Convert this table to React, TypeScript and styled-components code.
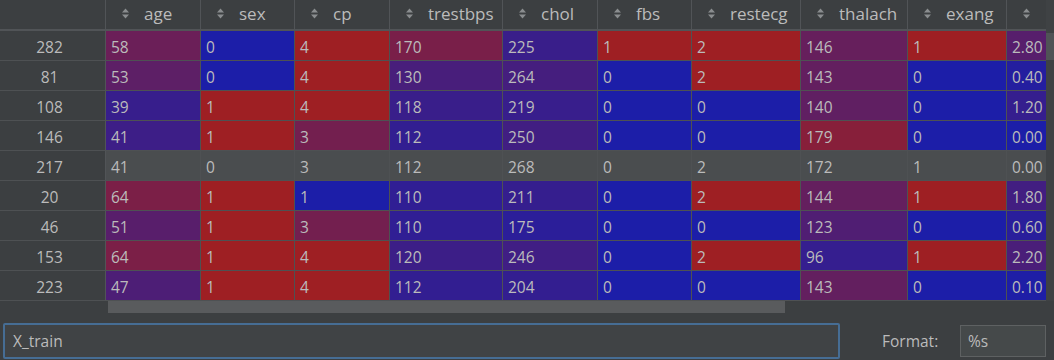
import React from 'react';
import styled, { createGlobalStyle } from 'styled-components';

const columns = [
  { name: 'age', width: 95, min: 29, max: 77 },
  { name: 'sex', width: 94, min: 0, max: 1 },
  { name: 'cp', width: 95, min: 1, max: 4 },
  { name: 'trestbps', width: 113, min: 94, max: 200 },
  { name: 'chol', width: 95, min: 126, max: 564 },
  { name: 'fbs', width: 94, min: 0, max: 1 },
  { name: 'restecg', width: 109, min: 0, max: 2 },
  { name: 'thalach', width: 107, min: 71, max: 202 },
  { name: 'exang', width: 99, min: 0, max: 1 },
  { name: 'oldpeak', width: 100, min: 0, max: 6.2 },
];

const rows: { index: number; values: string[]; selected?: boolean }[] = [
  { index: 282, values: ['58', '0', '4', '170', '225', '1', '2', '146', '1', '2.80'] },
  { index: 81, values: ['53', '0', '4', '130', '264', '0', '2', '143', '0', '0.40'] },
  { index: 108, values: ['39', '1', '4', '118', '219', '0', '0', '140', '0', '1.20'] },
  { index: 146, values: ['41', '1', '3', '112', '250', '0', '0', '179', '0', '0.00'] },
  { index: 217, values: ['41', '0', '3', '112', '268', '0', '2', '172', '1', '0.00'], selected: true },
  { index: 20, values: ['64', '1', '1', '110', '211', '0', '2', '144', '1', '1.80'] },
  { index: 46, values: ['51', '1', '3', '110', '175', '0', '0', '123', '0', '0.60'] },
  { index: 153, values: ['64', '1', '4', '120', '246', '0', '2', '96', '1', '2.20'] },
  { index: 223, values: ['47', '1', '4', '112', '204', '0', '0', '143', '0', '0.10'] },
];

const BLUE = [28, 30, 168];
const RED = [158, 31, 35];

// blue for the column minimum, red for the maximum
const heatColor = (value: number, min: number, max: number) => {
  const t = Math.min(1, Math.max(0, (value - min) / (max - min)));
  const c = BLUE.map((b, i) => Math.round(b + (RED[i] - b) * t));
  return `rgb(${c[0]}, ${c[1]}, ${c[2]})`;
};

const SortIcon = () => (
  <svg width="7" height="11" viewBox="0 0 7 11">
    <path d="M0 4.5 L3.5 0.5 L7 4.5 Z" fill="#8a8d8f" />
    <path d="M0 6.5 L7 6.5 L3.5 10.5 Z" fill="#8a8d8f" />
  </svg>
);

const App: React.FC = () => {
  return (
    <>
      <GlobalStyle />
      <Page>
        <TableArea>
          <Viewport>
            <HeaderRow>
              <IndexHeader />
              {columns.map((col, i) => (
                <HeaderCell key={col.name} $width={col.width}>
                  <SortIcon />
                  {i < columns.length - 1 && <HeaderLabel>{col.name}</HeaderLabel>}
                </HeaderCell>
              ))}
            </HeaderRow>
            {rows.map(row => (
              <Row key={row.index}>
                <IndexCell>{row.index}</IndexCell>
                {row.values.map((v, i) => (
                  <Cell
                    key={columns[i].name}
                    $width={columns[i].width}
                    style={{
                      background: row.selected
                        ? '#4a4d4f'
                        : heatColor(parseFloat(v), columns[i].min, columns[i].max),
                    }}
                  >
                    {v}
                  </Cell>
                ))}
              </Row>
            ))}
          </Viewport>
          <VScroll>
            <VThumb />
          </VScroll>
        </TableArea>
        <HScroll>
          <HThumb />
        </HScroll>
        <Footer>
          <NameInput>X_train</NameInput>
          <FormatLabel>Format:</FormatLabel>
          <FormatInput>%s</FormatInput>
        </Footer>
      </Page>
    </>
  );
};

const GlobalStyle = createGlobalStyle`
  body {
    margin: 0;
    background: #3c3f41;
    overflow: hidden;
  }
`;

const Page = styled.div`
  width: 1054px;
  height: 360px;
  display: flex;
  flex-direction: column;
  background: #3c3f41;
  font-family: 'Open Sans', 'Noto Sans', sans-serif;
  font-size: 15.5px;
  color: #bbbbbb;
`;

const TableArea = styled.div`
  display: flex;
  height: 301px;
`;

const Viewport = styled.div`
  width: 1046px;
  overflow: hidden;
  display: flex;
  flex-direction: column;
`;

const HeaderRow = styled.div`
  display: flex;
  flex-shrink: 0;
  height: 31px;
  box-sizing: border-box;
  border-bottom: 2px solid #515457;
`;

const IndexHeader = styled.div`
  width: 106px;
  flex-shrink: 0;
  box-sizing: border-box;
  border-right: 1px solid #515457;
`;

const HeaderCell = styled.div<{ $width: number }>`
  width: ${p => p.$width}px;
  flex-shrink: 0;
  box-sizing: border-box;
  border-right: 1px solid #515457;
  display: flex;
  align-items: center;
  padding-left: 16px;
  padding-bottom: 3px;
  white-space: nowrap;
  overflow: hidden;
`;

const HeaderLabel = styled.span`
  margin-left: 15px;
  font-size: 17px;
`;

const Row = styled.div`
  display: flex;
  flex-shrink: 0;
  height: 30px;
`;

const IndexCell = styled.div`
  width: 106px;
  flex-shrink: 0;
  box-sizing: border-box;
  border-right: 1px solid #515457;
  border-bottom: 1px solid #4e5153;
  display: flex;
  align-items: center;
  justify-content: center;
  padding: 2px 6px 0 0;
`;

const Cell = styled.div<{ $width: number }>`
  width: ${p => p.$width}px;
  flex-shrink: 0;
  box-sizing: border-box;
  border-right: 1px solid #4e5153;
  border-bottom: 1px solid #4e5153;
  display: flex;
  align-items: center;
  padding: 2px 0 0 5px;
  white-space: nowrap;
  overflow: hidden;
`;

const VScroll = styled.div`
  width: 8px;
  padding-top: 33px;
  background: #3f4244;
`;

const VThumb = styled.div`
  height: 27px;
  background: #505356;
`;

const HScroll = styled.div`
  height: 12px;
  padding-left: 108px;
`;

const HThumb = styled.div`
  width: 677px;
  height: 12px;
  background: #595b5d;
`;

const Footer = styled.div`
  display: flex;
  align-items: center;
  margin-top: 10px;
  height: 36px;
  padding-left: 3px;
`;

const NameInput = styled.div`
  width: 837px;
  height: 36px;
  box-sizing: border-box;
  border: 2px solid #466d94;
  border-radius: 2px;
  background: #404345;
  display: flex;
  align-items: center;
  padding-left: 8px;
  color: #bbbbbb;
`;

const FormatLabel = styled.div`
  margin-left: 42px;
  width: 78px;
`;

const FormatInput = styled.div`
  width: 86px;
  height: 32px;
  box-sizing: border-box;
  border: 1px solid #5e6162;
  background: #45494a;
  display: flex;
  align-items: center;
  padding-left: 7px;
`;

export default App;
